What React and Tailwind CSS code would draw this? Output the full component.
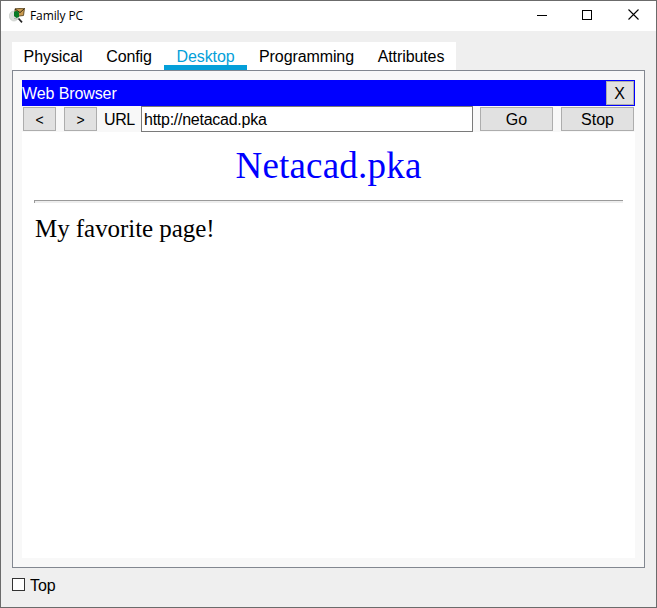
const tabs = [
  { label: 'Physical', width: 'w-[82px]' },
  { label: 'Config', width: 'w-[70px]' },
  { label: 'Desktop', width: 'w-[83px]', active: true },
  { label: 'Programming', width: 'w-[119px]' },
  { label: 'Attributes', width: 'w-[90px]' },
];

function AppIcon() {
  return (
    <svg className="ml-2 h-4 w-4 shrink-0" viewBox="0 0 16 16">
      <ellipse cx="5" cy="8" rx="4.7" ry="5" fill="#dde0dd" stroke="#bfc4bf" strokeWidth=".6" />
      <path d="M6 .8 15.5.2 14.5 7.5 6 8.5Z" fill="#c99a50" stroke="#4d3a14" strokeWidth=".8" />
      <path d="M6 1 11 4.6 15.4.6" fill="none" stroke="#33280f" strokeWidth="1" />
      <path d="M5 4Q8 2 10 4.5V9L7.5 10 5 8Z" fill="#087a25" />
      <path d="M9.5 10.5 13 14.3" stroke="#252525" strokeWidth="1.7" />
      <path d="M5 10.5 8.5 11" stroke="#aeb3ae" strokeWidth="1" />
    </svg>
  );
}

function TitleBar() {
  return (
    <header className="flex h-[30px] shrink-0 items-center bg-white">
      <AppIcon />
      <h1 className="ml-[5px] flex-1 whitespace-nowrap font-['Open_Sans',sans-serif] text-[12px] leading-[16px] tracking-[-0.1px]">Family PC</h1>
      <button aria-label="Minimize" className="flex h-full w-11 items-center justify-center pb-1">
        <svg width="10" height="11" shapeRendering="crispEdges"><path d="M0 6.5H10" stroke="#000" /></svg>
      </button>
      <button aria-label="Maximize" className="flex h-full w-[46px] items-center justify-center pb-[3px]">
        <svg width="10" height="11" shapeRendering="crispEdges"><path d="M.5 1.5H9.5V10.5H.5Z" fill="none" stroke="#000" /></svg>
      </button>
      <button aria-label="Close" className="flex h-full w-[46px] items-center justify-center pb-[3px]">
        <svg width="11" height="11"><path d="M.5.5 10.5 10.5M10.5.5.5 10.5" stroke="#000" strokeWidth="1.1" /></svg>
      </button>
    </header>
  );
}

function Button({ children, className }) {
  return (
    <button className={`flex h-6 shrink-0 items-center justify-center border border-[#adadad] bg-[#e1e1e1] pt-0.5 leading-none ${className}`}>
      {children}
    </button>
  );
}

export default function App() {
  return (
    <div className="flex h-[608px] w-[657px] flex-col border border-[#6b6b6b] bg-[#efefef] font-['Liberation_Sans',Arial,sans-serif] text-base leading-5 text-black">
      <TitleBar />
      <main className="flex flex-1 flex-col pl-[11px] pr-[11px] pt-[11px]">
        <nav className="flex h-7 w-[444px] shrink-0 bg-white tracking-[-0.1px]">
          {tabs.map((tab) => (
            <button
              key={tab.label}
              className={`flex h-7 justify-center pt-[5px] whitespace-nowrap ${tab.width} ${tab.active ? 'border-b-[5px] border-[#049fd9] text-[#049fd9]' : ''}`}
            >
              {tab.label}
            </button>
          ))}
        </nav>
        <section className="flex h-[498px] w-[633px] shrink-0 flex-col border border-[#828790] bg-[#f8f8f8] px-[9px] pt-[9px]">
          <div className="flex h-[26px] w-[613px] shrink-0 items-center justify-between bg-[#0000ff] pr-px text-white">
            <span className="pt-px tracking-[-0.1px]">Web Browser</span>
            <Button className="w-7 pr-px text-black">X</Button>
          </div>
          <div className="flex h-[26px] w-[613px] shrink-0 items-center px-px">
            <Button className="w-[33px] text-sm">&lt;</Button>
            <Button className="ml-2 w-[33px] text-sm">&gt;</Button>
            <label htmlFor="url" className="w-11 pl-[7px] pt-0.5 tracking-[-0.4px]">URL</label>
            <input id="url" defaultValue="http://netacad.pka" className="h-[26px] w-[332px] border border-[#7a7a7a] bg-white px-[2px] pt-0.5 tracking-[-0.26px] outline-none" />
            <Button className="ml-[7px] w-[73px]">Go</Button>
            <Button className="ml-2 w-[73px]">Stop</Button>
          </div>
          <article className="h-[426px] w-[613px] bg-white px-3 pt-3 font-['Liberation_Serif','Times_New_Roman',serif]">
            <h2 className="text-center text-[37px] leading-[44px] tracking-[0.2px] text-[#0000ff]">Netacad.pka</h2>
            <hr className="mt-3 h-[3px] border-0 border-t border-l border-[#9a9a9a] bg-[#eeeeee]" />
            <p className="mt-[11px] pl-px text-[25px] leading-[30px] tracking-[-0.05px]">My favorite page!</p>
          </article>
        </section>
        <label className="mt-[7px] flex items-center">
          <input type="checkbox" className="-mt-0.5 h-[13px] w-[13px] appearance-none border border-[#333] bg-white" />
          <span className="ml-[5px] pt-px tracking-[-0.1px]">Top</span>
        </label>
      </main>
    </div>
  );
}
